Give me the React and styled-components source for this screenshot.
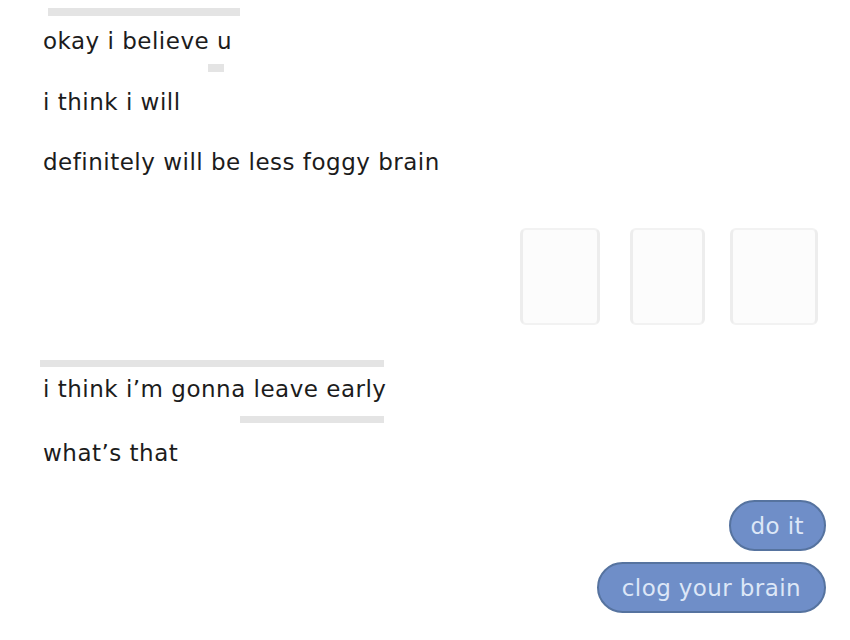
import React from "react";
import styled, { createGlobalStyle } from "styled-components";

const Global = createGlobalStyle`
  html, body {
    margin: 0;
    padding: 0;
    background: #ffffff;
  }
  body {
    font-family: "DejaVu Sans", "Liberation Sans", sans-serif;
    width: 850px;
    height: 640px;
    overflow: hidden;
  }
`;

const Thread = styled.div`
  display: flex;
  flex-direction: column;
  padding-top: 8px;
`;

const Rule = styled.div`
  height: ${(p) => p.$h || 8}px;
  width: ${(p) => p.$w}px;
  margin-left: ${(p) => p.$left}px;
  margin-top: ${(p) => p.$top || 0}px;
  background: #e4e4e4;
`;

const Incoming = styled.div`
  margin-left: 43px;
  margin-top: ${(p) => p.$top}px;
  font-size: 23px;
  line-height: 28px;
  color: #1c1c1c;
  letter-spacing: 0.5px;
`;

const Tiles = styled.div`
  display: flex;
  justify-content: flex-end;
  align-items: flex-start;
  margin: 52px 32px 0 0;
`;

const Tile = styled.div`
  box-sizing: border-box;
  width: ${(p) => p.$w}px;
  margin-left: ${(p) => p.$gap || 0}px;
  height: 97px;
  background: #fcfcfc;
  border-left: 3px solid #ededed;
  border-right: 3px solid #ededed;
  border-top: 2px solid #f2f2f2;
  border-bottom: 2px solid #f2f2f2;
  border-radius: 6px;
`;

const Outgoing = styled.div`
  align-self: flex-end;
  margin-right: 24px;
  margin-top: ${(p) => p.$top}px;
  height: 51px;
  box-sizing: border-box;
  padding: 0 ${(p) => p.$pad}px;
  display: flex;
  align-items: center;
  border-radius: 26px;
  background: #6f8ec8;
  border: 2px solid #56739f;
  color: #dde7f7;
  font-size: 23px;
  letter-spacing: 0.4px;
`;

export default function App() {
  return (
    <>
      <Global />
      <Thread>
        <Rule $left={48} $w={192} />
        <Incoming $top={11}>okay i believe u</Incoming>
        <Rule $left={208} $w={16} $top={9} />
        <Incoming $top={16}>i think i will</Incoming>
        <Incoming $top={32}>definitely will be less foggy brain</Incoming>
        <Tiles>
          <Tile $w={80} />
          <Tile $w={75} $gap={30} />
          <Tile $w={88} $gap={25} />
        </Tiles>
        <Rule $left={40} $w={344} $h={7} $top={35} />
        <Incoming $top={8}>i think i’m gonna leave early</Incoming>
        <Rule $left={240} $w={144} $h={7} $top={13} />
        <Incoming $top={16}>what’s that</Incoming>
        <Outgoing $top={33} $pad={20}>do it</Outgoing>
        <Outgoing $top={11} $pad={23}>clog your brain</Outgoing>
      </Thread>
    </>
  );
}
